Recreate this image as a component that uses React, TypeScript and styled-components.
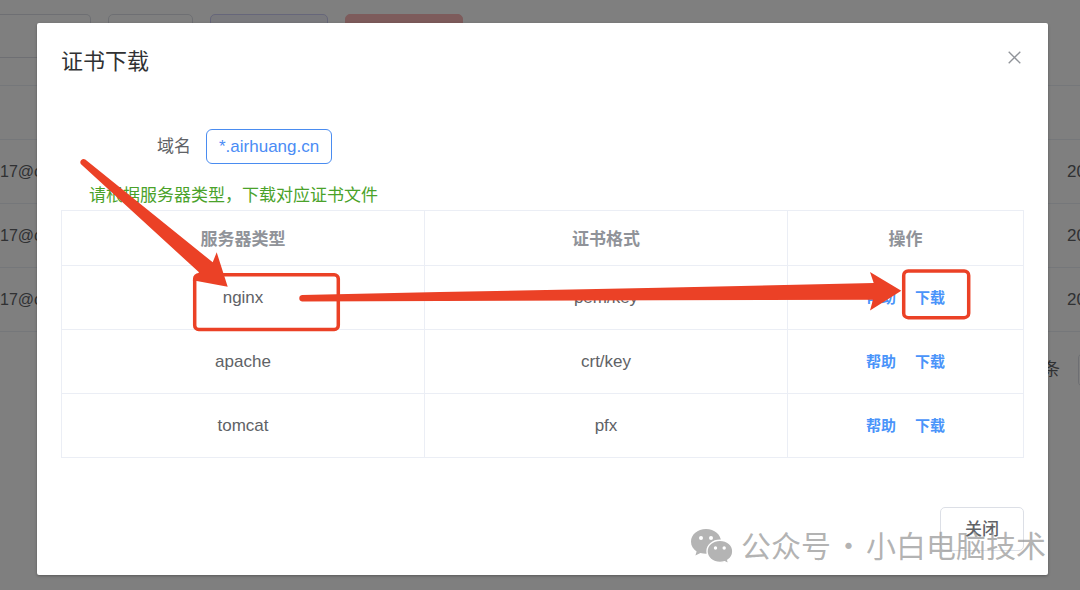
import React from 'react';
import styled, { createGlobalStyle } from 'styled-components';

const GlobalStyle = createGlobalStyle`
  * { box-sizing: border-box; }
  body {
    margin: 0;
    background: #fff;
    color: #606266;
    font-family: "Liberation Sans", "Noto Sans CJK SC", sans-serif;
    font-size: 17px;
    line-height: 24px;
  }
  button, input { font: inherit; }
`;

const Page = styled.div`
  position: relative;
  min-height: 100vh;
  overflow: hidden;
`;

const Behind = styled.div`
  position: absolute;
  inset: 0;
  padding-top: 14px;
  overflow: hidden;
`;

const Toolbar = styled.div`
  display: flex;
  gap: 17px;
  margin-bottom: 27px;
`;

const SearchInput = styled.input`
  width: 91px;
  height: 44px;
  border: 1px solid #dcdfe6;
  border-left: 0;
  border-radius: 0 5px 5px 0;
`;

const tones = {
  plain: { border: '#dcdfe6', fill: '#fff' },
  primary: { border: '#ccccf4', fill: '#f2f3fa' },
  danger: { border: '#fab6b6', fill: '#fab6b6' },
};

const ToolButton = styled.button<{ $tone: keyof typeof tones; $width: number }>`
  width: ${p => p.$width}px;
  height: 44px;
  border: 1px solid ${p => tones[p.$tone].border};
  border-radius: 5px;
  background: ${p => tones[p.$tone].fill};
`;

const BackTable = styled.table`
  width: 100%;
  table-layout: fixed;
  border-collapse: collapse;
  border-top: 1px solid #ebeef5;

  tr { height: 64px; border-bottom: 1px solid #ebeef5; }
  thead tr { height: 54px; }
  td { padding: 0; white-space: nowrap; overflow: hidden; font-size: 16px; }
  th:last-child { width: 13px; }
  td:last-child { font-size: 17px; }
`;

const Pager = styled.div`
  display: flex;
  justify-content: flex-end;
  align-items: center;
  gap: 18px;
  margin-top: 21px;
`;

const PageButton = styled.button`
  width: 34px;
  height: 34px;
  margin-right: -32px;
  flex: none;
  border: 1px solid #dcdfe6;
  border-radius: 5px;
  background: #fff;
`;

const Overlay = styled.div`
  position: relative;
  min-height: 100vh;
  padding: 23px 32px 15px 37px;
  background: rgba(0, 0, 0, 0.5);
`;

const Dialog = styled.section`
  position: relative;
  padding: 24px;
  border-radius: 2px;
  background: #fff;
  box-shadow: 0 1px 3px rgba(0, 0, 0, 0.3);
`;

const DialogHeader = styled.header`
  display: flex;
  justify-content: space-between;
  align-items: flex-start;
  margin-bottom: 52px;
`;

const Title = styled.h2`
  margin: 0;
  color: #303133;
  font-size: 22px;
  font-weight: 400;
  line-height: 30px;
`;

const CloseIconButton = styled.button`
  display: flex;
  padding: 4px 3px;
  border: 0;
  background: none;
  color: #909399;
`;

const Field = styled.div`
  display: flex;
  align-items: center;
  gap: 15px;
  padding-left: 96px;
  margin-bottom: 20px;
`;

const DomainTag = styled.span`
  padding: 5px 12px 4px;
  border: 1px solid #4a8cf0;
  border-radius: 6px;
  color: #4a8cf5;
`;

const Hint = styled.p`
  margin: 0 0 2px;
  padding-left: 28px;
  color: #4aa22a;
`;

const CertTable = styled.table`
  width: 100%;
  table-layout: fixed;
  border-collapse: collapse;
  text-align: center;

  th, td { border: 1px solid #ebeef5; }
  td { height: 64px; padding: 1px 0 0; }
  td:last-child { padding: 0; }
  th { height: 55px; padding: 4px 0 0; color: #909399; font-weight: 700; }
  th:last-child { width: 236px; }
`;

const Actions = styled.div`
  display: flex;
  justify-content: center;
  gap: 19px;
`;

const ActionLink = styled.a`
  color: #4a94fa;
  font-size: 15px;
  font-weight: 700;
  text-decoration: none;
`;

const DialogFooter = styled.footer`
  display: flex;
  justify-content: flex-end;
  margin-top: 49px;
`;

const CloseButton = styled.button`
  width: 84px;
  height: 44px;
  padding: 2px 0 0;
  border: 1px solid #dcdfe6;
  border-radius: 5px;
  background: #fff;
  color: #606266;
  font-weight: 500;
`;

const Annotations = styled.svg`
  position: absolute;
  top: 0;
  left: 0;
  pointer-events: none;
`;

const Watermark = styled.div`
  position: absolute;
  right: 2px;
  bottom: 11px;
  display: flex;
  align-items: flex-start;
  color: rgba(150, 150, 150, 0.72);
  font-family: "Noto Sans CJK SC", sans-serif;
  font-size: 30px;
  line-height: 36px;
  pointer-events: none;

  svg { margin: 2px 8px 0 0; }
`;

const Dot = styled.span`
  width: 35px;
  text-align: center;
`;

const WeChatMark = () => (
  <svg width="42" height="36" viewBox="0 0 42 36">
    <path
      fill="#b4b4b4"
      d="M15 1C6.500 1 0 6.600 0 13.700c0 4 2.200 7.500 5.600 9.700L4.400 27.500l5-2.600c1.800.5 3.700.8 5.600.8 8.500 0 15-5.300 15-12C30 6.600 23.500 1 15 1z"
    />
    <path
      fill="#b4b4b4"
      stroke="#fff"
      strokeWidth="1.400"
      d="M29 12.200c-7.300 0-13 4.900-13 11.100s5.700 11.100 13 11.100c1.700 0 3.300-.3 4.700-.7l4 2.100-.9-3.600c3.100-2 5-5.300 5-8.900 0-6.200-5.500-11.100-12.800-11.100z"
    />
    <g fill="#fff">
      <circle cx="10" cy="10" r="2" />
      <circle cx="20" cy="10" r="2" />
      <circle cx="24.500" cy="20" r="1.700" />
      <circle cx="33.200" cy="20" r="1.700" />
    </g>
  </svg>
);

const accounts = ['17@c', '17@c', '17@c'];

const certificates = [
  { server: 'nginx', format: 'pem/key' },
  { server: 'apache', format: 'crt/key' },
  { server: 'tomcat', format: 'pfx' },
];

export default function App() {
  return (
    <Page>
      <GlobalStyle />
      <Behind aria-hidden="true">
        <Toolbar>
          <SearchInput aria-label="搜索" tabIndex={-1} />
          <ToolButton $tone="plain" $width={85} tabIndex={-1} />
          <ToolButton $tone="primary" $width={118} tabIndex={-1} />
          <ToolButton $tone="danger" $width={118} tabIndex={-1} />
        </Toolbar>
        <BackTable>
          <thead>
            <tr><th /><th /></tr>
          </thead>
          <tbody>
            {accounts.map((account, i) => (
              <tr key={i}><td>{account}</td><td>20</td></tr>
            ))}
          </tbody>
        </BackTable>
        <Pager>
          <span>条</span>
          <PageButton tabIndex={-1} />
        </Pager>
      </Behind>

      <Overlay>
        <Dialog role="dialog" aria-labelledby="dialog-title">
          <DialogHeader>
            <Title id="dialog-title">证书下载</Title>
            <CloseIconButton aria-label="关闭对话框">
              <svg width="13" height="13" viewBox="0 0 13 13" fill="none" stroke="currentColor" strokeWidth="1.300">
                <path d="M.7.7l11.600 11.600M12.300.7L.7 12.300" />
              </svg>
            </CloseIconButton>
          </DialogHeader>

          <Field>
            <span>域名</span>
            <DomainTag>*.airhuang.cn</DomainTag>
          </Field>
          <Hint>请根据服务器类型，下载对应证书文件</Hint>

          <CertTable>
            <thead>
              <tr>
                <th scope="col">服务器类型</th>
                <th scope="col">证书格式</th>
                <th scope="col">操作</th>
              </tr>
            </thead>
            <tbody>
              {certificates.map(({ server, format }) => (
                <tr key={server}>
                  <td>{server}</td>
                  <td>{format}</td>
                  <td>
                    <Actions>
                      <ActionLink href="#help">帮助</ActionLink>
                      <ActionLink href="#download">下载</ActionLink>
                    </Actions>
                  </td>
                </tr>
              ))}
            </tbody>
          </CertTable>

          <DialogFooter>
            <CloseButton>关闭</CloseButton>
          </DialogFooter>

          <Annotations width="1011" height="552" viewBox="37 23 1011 552" aria-hidden="true">
            <g fill="none" stroke="#eb4126" strokeWidth="3.500">
              <rect x="194.700" y="274.700" width="143.600" height="54.800" rx="4" />
              <rect x="903.700" y="271" width="65" height="46.700" rx="4.500" />
            </g>
            <g fill="#eb4126">
              <path d="M85.300 159.500L212.700 262.300L216.700 252.300L227.700 286.700L192.700 280.300L199 272.300L80.800 164A3.300 3.300 0 0 1 85.300 159.500Z" />
              <path d="M302 294.900L440 292L660 287.700L873.700 283L870 272L901.300 290.700L870 310.500L873 299.800L660 300.300L440 301L302 301.400A3.300 3.300 0 0 1 302 294.900Z" />
            </g>
          </Annotations>

          <Watermark>
            <WeChatMark />
            <span>公众号</span>
            <Dot>·</Dot>
            <span>小白电脑技术</span>
          </Watermark>
        </Dialog>
      </Overlay>
    </Page>
  );
}
